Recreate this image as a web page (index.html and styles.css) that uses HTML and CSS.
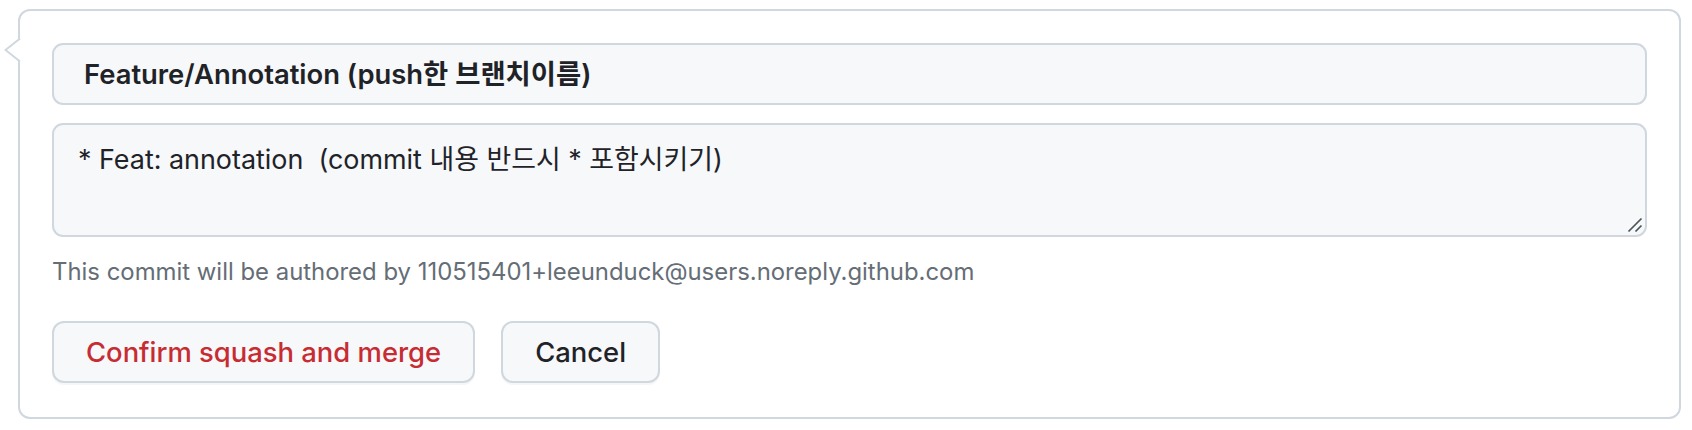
FILE: index.html
```html
<!DOCTYPE html>
<html lang="ko">
<head>
<meta charset="utf-8">
<link rel="stylesheet" href="styles.css">
</head>
<body>
<div class="page">
  <div class="merge-box">
    <svg class="caret" width="18" height="28" viewBox="0 0 18 28">
      <polygon points="18,1 2,13 18,25" fill="#ffffff"/>
      <polyline points="16,1.5 1.5,13 16,24.5" fill="none" stroke="#d0d7de" stroke-width="2"/>
    </svg>
    <div class="title-input">Feature/Annotation (push한 브랜치이름)</div>
    <div class="message">* Feat: annotation  (commit 내용 반드시 * 포함시키기)<svg class="grip" width="16" height="16" viewBox="0 0 16 16"><line x1="1.5" y1="14.5" x2="14.5" y2="1.5" stroke="#4d535a" stroke-width="1.7"/><line x1="8.5" y1="14.5" x2="14.5" y2="8.5" stroke="#4d535a" stroke-width="1.7"/></svg></div>
    <p class="note">This commit will be authored by 110515401+leeunduck@users.noreply.github.com</p>
    <div class="actions">
      <button class="btn btn-danger" type="button">Confirm squash and merge</button>
      <button class="btn" type="button">Cancel</button>
    </div>
  </div>
</div>
</body>
</html>
```

FILE: styles.css
```css
* { box-sizing: border-box; }
html, body { margin: 0; padding: 0; background: #ffffff; }
body {
  font-family: "Inter", "Noto Sans CJK KR", sans-serif;
  color: #1f2328;
}
.page {
  padding: 9px 11px 0 18px;
}
.merge-box {
  position: relative;
  border: 2px solid #d0d7de;
  border-radius: 12px;
  padding: 32px 32px 32px 32px;
  height: 410px;
}
.caret {
  position: absolute;
  left: -16px;
  top: 26px;
}
.title-input {
  height: 62px;
  border: 2px solid #d0d7de;
  border-radius: 11px;
  background: #f6f8fa;
  padding: 0 30px 4px;
  display: flex;
  align-items: center;
  font-size: 27.4px;
  font-weight: 600;
  color: #1f2328;
}
.message {
  position: relative;
  margin-top: 18px;
  height: 114px;
  border: 2px solid #d0d7de;
  border-radius: 11px;
  background: #f6f8fa;
  padding: 14px 24px;
  font-size: 26.9px;
  line-height: 40px;
  white-space: pre-wrap;
  color: #1f2328;
}
.grip {
  position: absolute;
  right: 2px;
  bottom: 2px;
}
.note {
  margin: 18px 0 0;
  font-size: 23.9px;
  line-height: 34px;
  color: #656d76;
}
.actions {
  display: flex;
  gap: 26px;
  margin-top: 32px;
}
.btn {
  height: 62px;
  padding: 0 32px;
  border: 2px solid #d0d7de;
  border-radius: 12px;
  background: #f6f8fa;
  box-shadow: 0 2px 0 rgba(31, 35, 40, 0.04);
  font-family: "Inter", "Noto Sans CJK KR", sans-serif;
  font-size: 27.4px;
  font-weight: 500;
  color: #1f2328;
}
.btn-danger {
  color: #c72c33;
}
```
